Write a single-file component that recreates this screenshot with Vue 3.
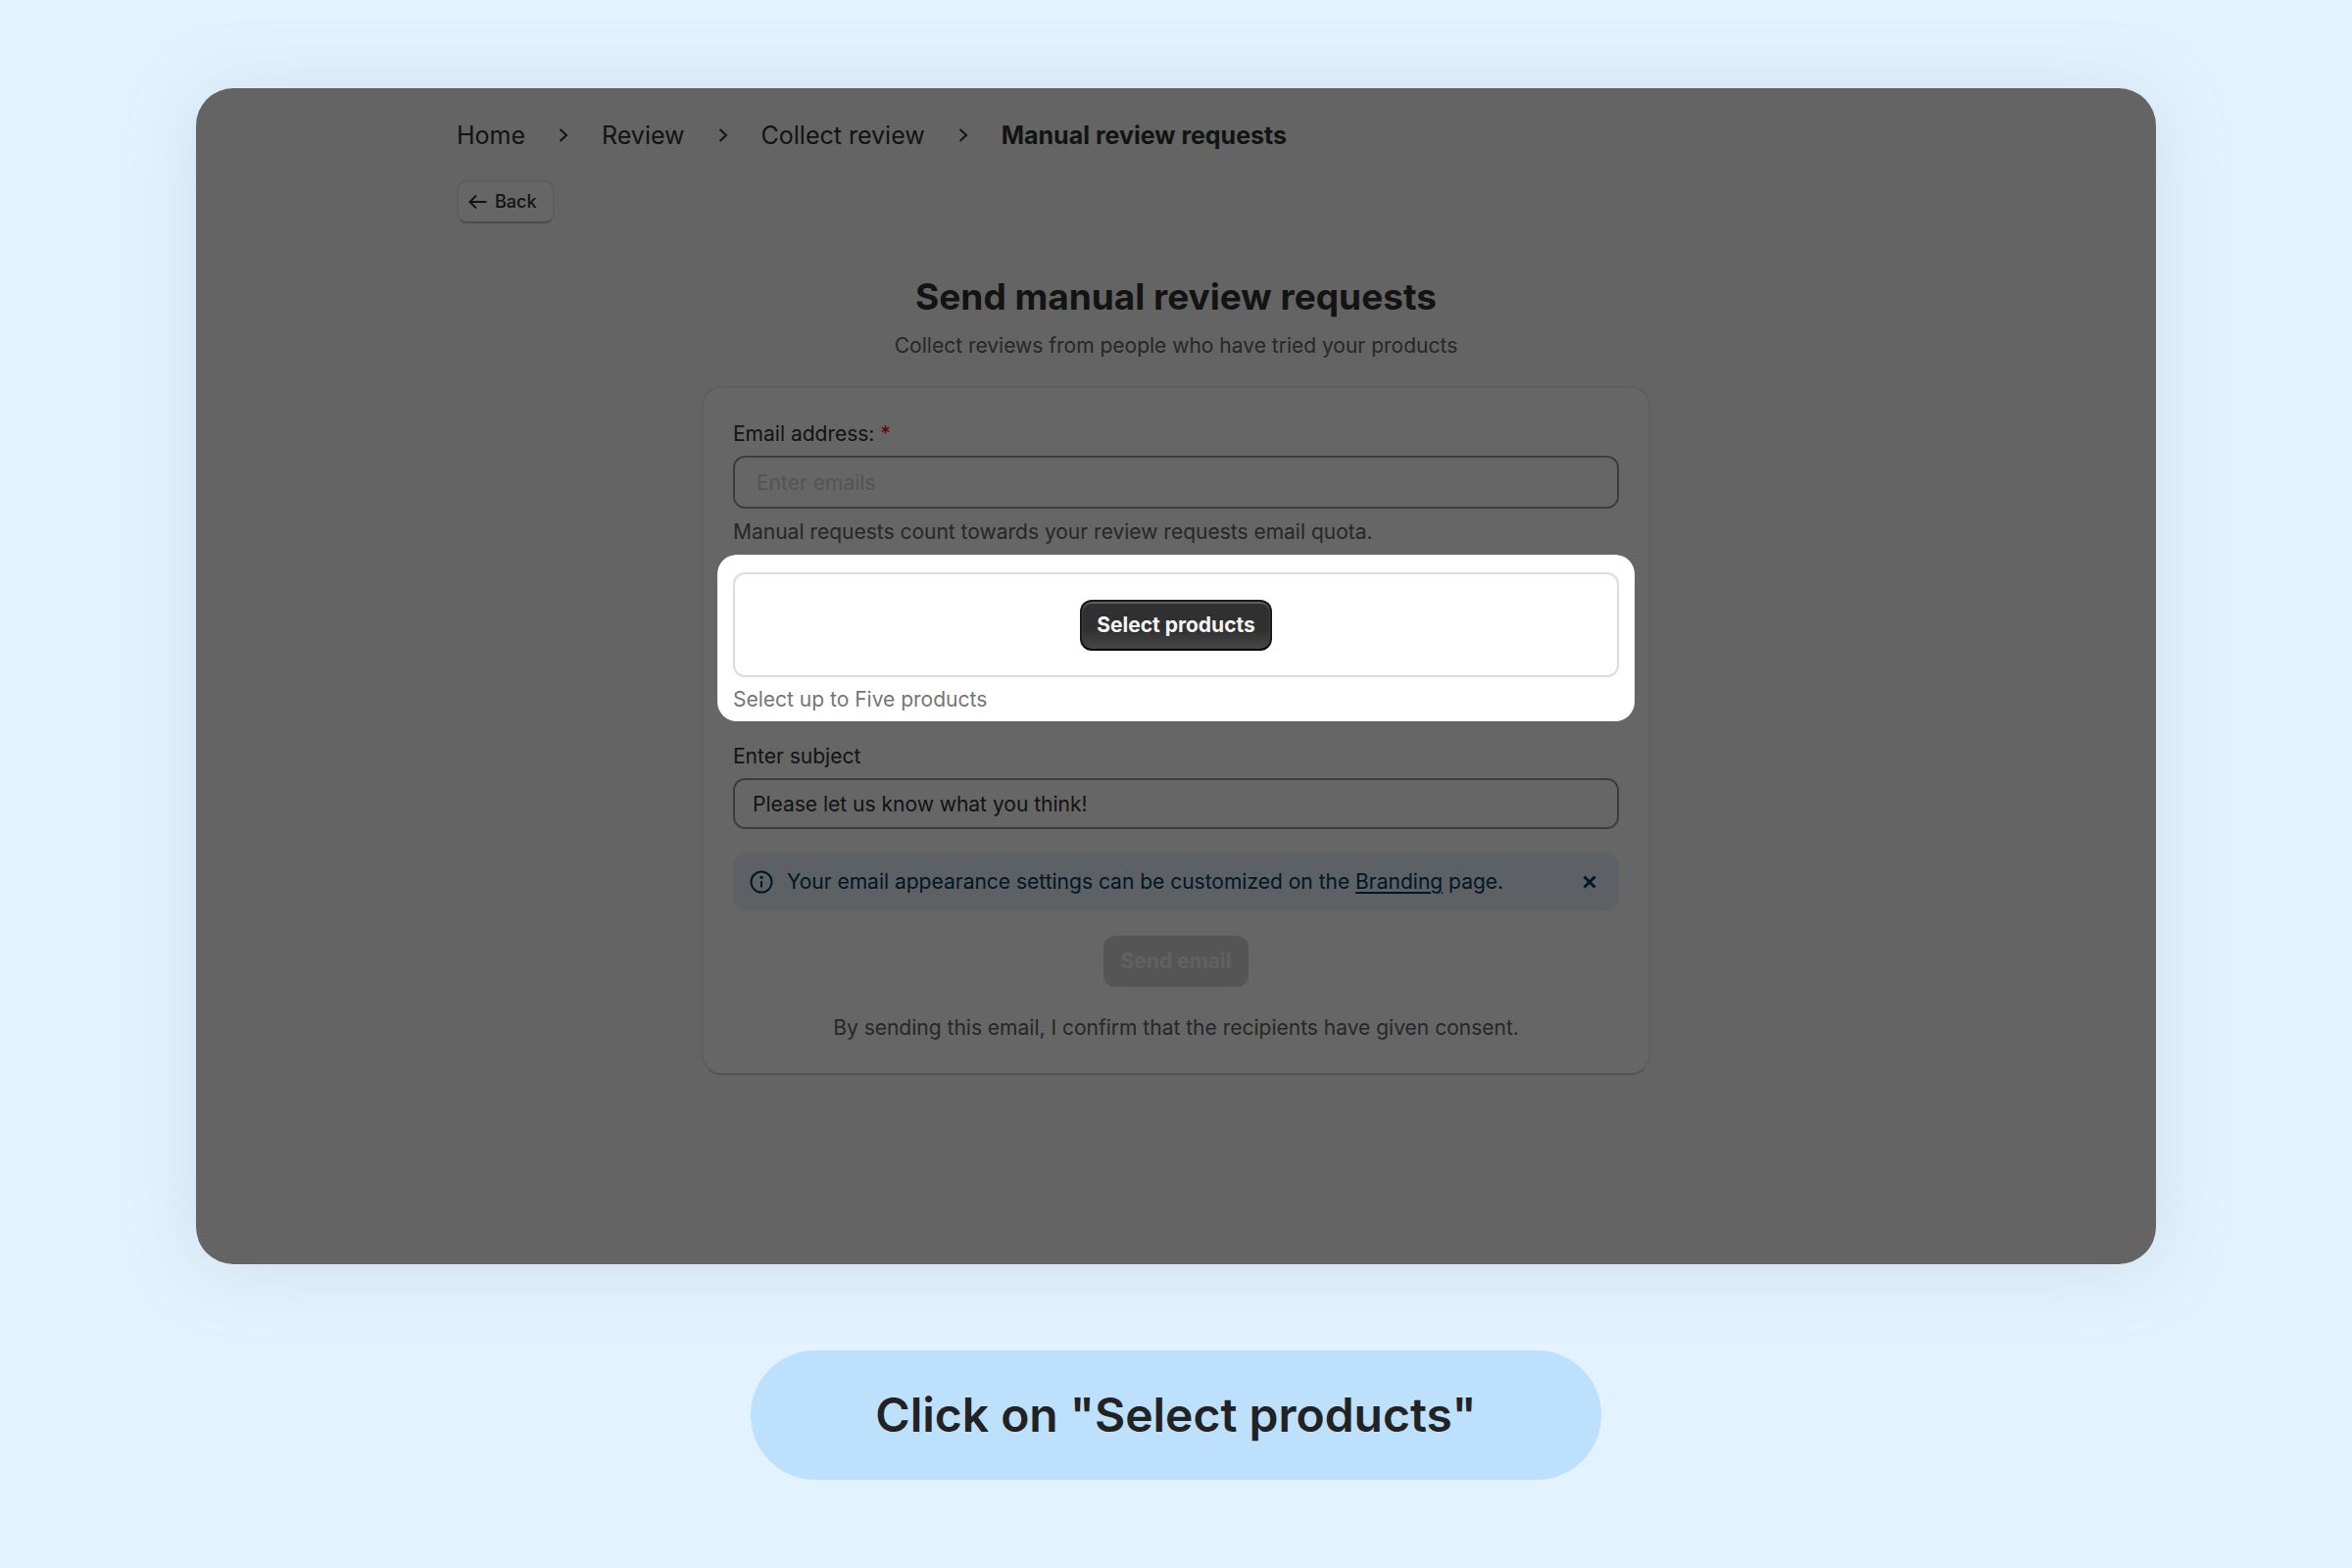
<script setup>
import { ref } from 'vue'

const trail = ['Home', 'Review', 'Collect review']
const emails = ref('')
const subject = ref('Please let us know what you think!')
const bannerOpen = ref(true)
</script>

<template>
  <main class="page">
    <section class="window">
      <div class="content">
        <nav class="crumbs" aria-label="Breadcrumb">
          <template v-for="item in trail" :key="item">
            <a href="#">{{ item }}</a>
            <svg class="chevron" viewBox="0 0 12 16" aria-hidden="true">
              <path d="M2.5 2 9 8l-6.500 6" />
            </svg>
          </template>
          <strong aria-current="page">Manual review requests</strong>
        </nav>

        <button type="button" class="back">
          <svg viewBox="0 0 20 16" aria-hidden="true">
            <path d="M18.500 8H2M8 1.500 1.500 8 8 14.500" />
          </svg>
          Back
        </button>

        <header class="heading">
          <h1>Send manual review requests</h1>
          <p>Collect reviews from people who have tried your products</p>
        </header>

        <form class="card" @submit.prevent>
          <label for="emails">Email address: <span class="required">*</span></label>
          <input id="emails" v-model="emails" class="emails" type="text" placeholder="Enter emails" />
          <p class="hint">Manual requests count towards your review requests email quota.</p>

          <div class="spotlight">
            <div class="picker">
              <button type="button" class="select">Select products</button>
            </div>
            <p>Select up to Five products</p>
          </div>

          <label for="subject">Enter subject</label>
          <input id="subject" v-model="subject" class="subject" type="text" />

          <div v-if="bannerOpen" class="banner">
            <svg class="info" viewBox="0 0 24 24" aria-hidden="true">
              <circle cx="12" cy="12" r="10.500" />
              <path d="M12 11v6.500" />
              <circle class="dot" cx="12" cy="7.300" r="1.600" />
            </svg>
            <p>Your email appearance settings can be customized on the <a href="#">Branding</a> page.</p>
            <button type="button" class="close" aria-label="Dismiss" @click="bannerOpen = false">
              <svg viewBox="0 0 14 14" aria-hidden="true"><path d="M1.500 1.500l11 11M12.500 1.500l-11 11" /></svg>
            </button>
          </div>

          <button type="submit" class="send" disabled>Send email</button>
          <p class="consent">By sending this email, I confirm that the recipients have given consent.</p>
        </form>
      </div>
    </section>

    <p class="caption">Click on "Select products"</p>
  </main>
</template>

<style>
body {
  margin: 0;
  background: #e2f3ff;
}
</style>

<style scoped>
* {
  box-sizing: border-box;
}

.page {
  display: flex;
  flex-direction: column;
  align-items: center;
  gap: 88px;
  min-height: 100vh;
  padding: 90px 8.3333% 88px;
  background: #e2f3ff;
  color: #303030;
  font-family: Inter, "Liberation Sans", sans-serif;
  font-size: 21px;
  font-weight: 420;
  line-height: 28px;
}

h1,
p {
  margin: 0;
}

button,
input {
  font: inherit;
  color: inherit;
}

svg {
  fill: none;
  stroke: currentColor;
  stroke-width: 2;
  flex: none;
}

.window {
  width: 100%;
  padding: 32px 32px 193px;
  overflow: hidden;
  border-radius: 38px;
  background: #fafafa;
  box-shadow: 0 4px 72px rgba(160, 165, 180, 0.28);
}

.content {
  display: flex;
  flex-direction: column;
  align-items: center;
  max-width: 1468px;
  margin: 0 auto;
}

.crumbs {
  display: flex;
  align-items: center;
  align-self: flex-start;
  gap: 33px;
  font-size: 25px;
  font-weight: 400;
  line-height: 32px;
}

.crumbs a {
  color: inherit;
  text-decoration: none;
}

.crumbs strong {
  font-weight: 700;
}

.chevron {
  width: 12px;
  height: 16px;
}

.back {
  display: flex;
  align-items: center;
  align-self: flex-start;
  gap: 7px;
  height: 44px;
  margin-top: 30px;
  padding: 0 16px 0 10px;
  border: 2px solid #ebebeb;
  border-bottom-color: #bdbdbd;
  border-radius: 10px;
  background: #ffffff;
  font-size: 18px;
  font-weight: 500;
}

.back svg {
  width: 20px;
  height: 16px;
}

.heading {
  margin-top: 51px;
  text-align: center;
}

.heading h1 {
  font-size: 37px;
  line-height: 48px;
  font-weight: 700;
}

.heading p {
  margin-top: 12px;
  color: #616161;
}

.card {
  display: flex;
  flex-direction: column;
  width: 100%;
  max-width: 968px;
  margin-top: 27px;
  padding: 33px 30px 32px;
  border: 2px solid #ebebeb;
  border-bottom-color: #d0d0d0;
  border-radius: 20px;
  background: #ffffff;
}

.required {
  color: #ff0000;
}

.emails,
.subject {
  width: 100%;
  height: 52px;
  margin-top: 8px;
  padding: 0 18px;
  border: 2px solid #9a9a9a;
  border-radius: 12px;
  background: #ffffff;
  outline: none;
}

.emails {
  height: 54px;
  padding: 0 22px;
}

.emails::placeholder {
  color: #d2d2d2;
  opacity: 1;
}

.hint {
  margin-top: 10px;
  color: #616161;
}

/* The spread shadow dims everything in the window except this block. */
.spotlight {
  position: relative;
  z-index: 1;
  margin: 9px -16px 22px;
  padding: 18px 16px 8px;
  border-radius: 20px;
  background: #ffffff;
  box-shadow: 0 0 0 3000px rgba(0, 0, 0, 0.6);
}

.spotlight p {
  margin-top: 9px;
  color: #757575;
}

.picker {
  display: flex;
  align-items: center;
  justify-content: center;
  height: 107px;
  border: 2px solid #dcdcdc;
  border-radius: 12px;
}

.select {
  height: 52px;
  padding: 0 15px;
  border: 2px solid #1a1a1a;
  border-bottom-color: #080808;
  border-radius: 12px;
  background: linear-gradient(#303030 60%, #474747);
  box-shadow: inset 0 2px 0 #5c5c5c, inset 1px 0 0 #3c3c3c, inset -1px 0 0 #3c3c3c;
  color: #f4f4f4;
  font-weight: 700;
}

.banner {
  display: flex;
  align-items: center;
  gap: 14px;
  height: 58px;
  margin-top: 25px;
  padding: 0 17px;
  border-radius: 12px;
  background: #e8f1fd;
  color: #003a5a;
}

.banner p {
  flex: 1;
}

.banner a {
  color: inherit;
  text-underline-offset: 3px;
}

.info {
  width: 24px;
  height: 24px;
}

.info .dot {
  fill: currentColor;
  stroke: none;
}

.close {
  display: flex;
  padding: 6px;
  border: 0;
  background: none;
}

.close svg {
  width: 14px;
  height: 14px;
  stroke-width: 3;
}

.send {
  align-self: center;
  height: 52px;
  margin-top: 26px;
  padding: 0 18px;
  border: 0;
  border-radius: 12px;
  background: #d5d5d5;
  color: #f2f2f2;
  font-weight: 700;
}

.consent {
  margin-top: 28px;
  color: #616161;
  text-align: center;
}

.caption {
  padding: 34px 127px;
  border-radius: 66px;
  background: #bde0fd;
  color: #222222;
  font-size: 48px;
  line-height: 64px;
  font-weight: 600;
}
</style>
